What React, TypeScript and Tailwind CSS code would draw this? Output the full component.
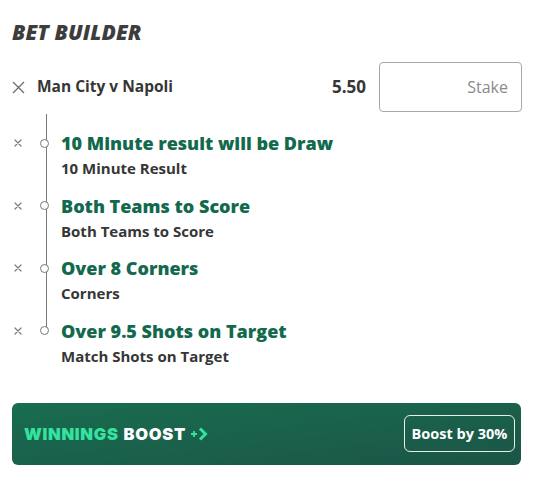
import React from "react";

const items = [
  { title: "10 Minute result will be Draw", sub: "10 Minute Result" },
  { title: "Both Teams to Score", sub: "Both Teams to Score" },
  { title: "Over 8 Corners", sub: "Corners" },
  { title: "Over 9.5 Shots on Target", sub: "Match Shots on Target" },
];

function SmallX() {
  return (
    <svg width="8" height="8" viewBox="0 0 8 8" className="block">
      <path d="M1 1L7 7M7 1L1 7" stroke="#7a7a7a" strokeWidth="1.2" strokeLinecap="round" />
    </svg>
  );
}

export default function App() {
  return (
    <div className="w-[533px] h-[485px] bg-white px-3 font-['Open_Sans',sans-serif] text-[#333]">
      <h1 className="pt-[18px] text-[21px] leading-[28px] font-extrabold italic text-[#3d3d3d] tracking-[0.1px]">
        BET BUILDER
      </h1>
      <div className="mt-[16px] flex items-center h-[50px]">
        <svg width="13" height="13" viewBox="0 0 13 13" className="block">
          <path d="M1 1L12 12M12 1L1 12" stroke="#6e6e6e" strokeWidth="1.3" />
        </svg>
        <div className="ml-[12px] text-[15.5px] font-bold text-[#363636]">Man City v Napoli</div>
        <div className="ml-auto text-[17px] font-bold text-[#363636]">5.50</div>
        <div className="ml-[13px] w-[143px] h-[50px] border border-[#a8a8a8] rounded-[4px] flex items-center justify-end pr-[13px] mr-[-1px]">
          <span className="text-[16px] text-[#8a8a8a]">Stake</span>
        </div>
      </div>
      <div className="relative pt-[19px] flex flex-col gap-[15.5px]">
        <div className="absolute left-[33.5px] top-[2px] h-[218px] w-px bg-[#777]" />
        {items.map((it) => (
          <div key={it.title} className="relative flex">
            <div className="w-[49px] h-[24px] flex items-center shrink-0">
              <div className="ml-[2px]"><SmallX /></div>
              <div className="ml-[18px] w-[9px] h-[9px] rounded-full border border-[#777] bg-white" />
            </div>
            <div className="flex flex-col">
              <div className="text-[18px] leading-[24px] font-extrabold text-[#12694d]">{it.title}</div>
              <div className="mt-[3px] text-[15px] leading-[20px] font-bold text-[#363636]">{it.sub}</div>
            </div>
          </div>
        ))}
      </div>
      <div className="mt-[37px] h-[62px] rounded-[6px] bg-gradient-to-br from-[#186d50] to-[#1b5546] flex items-center pl-[12px] pr-[6px]">
        <div className="flex items-center font-['Inter',sans-serif] text-[16.5px] font-black tracking-[0.7px] pt-[1px]">
          <span className="text-[#35e3a0]">WINNINGS</span>
          <span className="ml-[5px] text-white">BOOST</span>
          <svg width="20" height="14" viewBox="0 0 20 14" className="ml-[4px] block">
            <path d="M1 7H7M4 4V10" stroke="#35e3a0" strokeWidth="1.8" />
            <path d="M10 1.5L15.5 7L10 12.5" stroke="#35e3a0" strokeWidth="3" fill="none" />
          </svg>
        </div>
        <div className="ml-auto h-[37px] w-[111px] flex items-center justify-center border border-[#e6efe9] rounded-[6px] text-white text-[14.5px] font-bold">
          Boost by 30%
        </div>
      </div>
    </div>
  );
}
